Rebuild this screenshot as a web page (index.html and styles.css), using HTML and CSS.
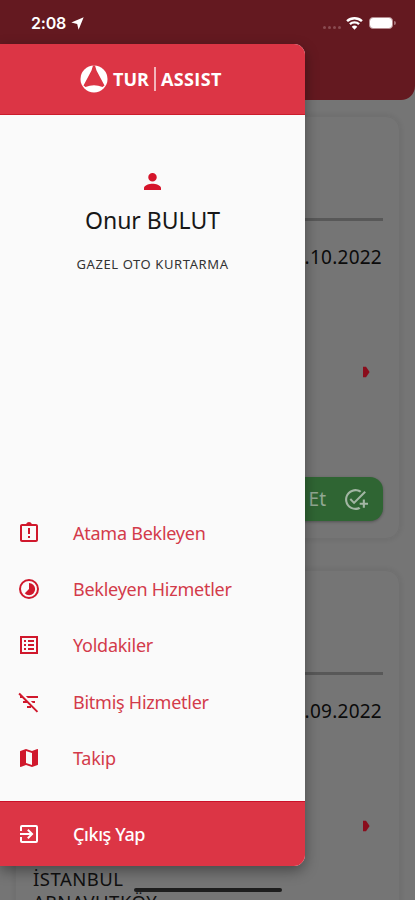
FILE: index.html
```html
<!DOCTYPE html>
<html lang="tr">
<head>
<meta charset="utf-8">
<title>Tur Assist</title>
<link rel="stylesheet" href="styles.css">
</head>
<body>
<div class="screen">
  <header class="topbar">
    <div class="clock">2:08
      <svg class="location" viewBox="0 0 12 12"><path d="M11.7.3 7 11.7 5.700 6.400.3 5z"/></svg>
    </div>
    <div class="signals">
      <span class="cell"><i></i><i></i><i></i><i></i></span>
      <svg class="wifi" viewBox="0 0 16 13"><path d="M1 4.800a10.200 10.200 0 0 1 14 0M3.700 7.600a6.300 6.300 0 0 1 8.600 0" fill="none" stroke="#fff" stroke-width="2.300"/><path d="M5.400 10a4 4 0 0 1 5.200 0L8 12.800z" fill="#fff"/></svg>
      <span class="battery"></span>
    </div>
  </header>
  <main class="cards">
    <section class="card">
      <div class="divider"></div>
      <p class="date">.10.2022</p>
      <svg class="arrow" viewBox="0 0 8 12"><path d="M1 .8h3L7.600 6 4 11.200H1z"/></svg>
      <div class="accept">Et
        <svg viewBox="0 0 24 24"><path d="M22 5.200 10.600 16.600 6.300 12.300l1.400-1.400 2.900 2.900L20.600 3.800zM12 20c-4.400 0-8-3.600-8-8s3.600-8 8-8c1.600 0 3 .5 4.300 1.300l1.400-1.500A10 10 0 1 0 12 22c1.700 0 3.400-.4 4.800-1.200l-1.500-1.500c-1 .5-2.100.7-3.300.7zm7-5h-3v2h3v3h2v-3h3v-2h-3v-3h-2z"/></svg>
      </div>
    </section>
    <section class="card">
      <div class="divider"></div>
      <p class="date">.09.2022</p>
      <svg class="arrow" viewBox="0 0 8 12"><path d="M1 .8h3L7.600 6 4 11.200H1z"/></svg>
      <p class="address">İSTANBUL<br>ARNAVUTKÖY</p>
    </section>
  </main>
  <aside class="drawer">
    <div class="brand">
      <svg class="logo" viewBox="0 0 28 28"><circle cx="14" cy="14" r="13.500" fill="#fff"/><path d="M13 .5h2l1.500 5L24.500 20.500 22.500 22Q14 18.500 5.500 22L3.500 20.500 11.500 5.500z" fill="#dc3545"/></svg>
      <span class="tur">TUR</span><span class="bar"></span><span class="assist">ASSIST</span>
    </div>
    <div class="profile">
      <svg class="person" viewBox="4 4 16 16"><path d="M12 12c2.210 0 4-1.790 4-4s-1.790-4-4-4-4 1.790-4 4 1.790 4 4 4zm0 2c-2.670 0-8 1.340-8 4v2h16v-2c0-2.660-5.330-4-8-4z"/></svg>
      <h1>Onur BULUT</h1>
      <p>GAZEL OTO KURTARMA</p>
    </div>
    <nav class="menu">
      <a><svg viewBox="0 0 24 24"><path d="M11 15h2v2h-2zm0-8h2v6h-2zm8-4h-4.180C14.400 1.840 13.300 1 12 1s-2.400.84-2.820 2H5c-1.100 0-2 .9-2 2v14c0 1.100.9 2 2 2h14c1.100 0 2-.9 2-2V5c0-1.100-.9-2-2-2zm0 16H5V5h14z"/></svg><span>Atama Bekleyen</span></a>
      <a><svg viewBox="0 0 24 24"><path d="M16.240 7.760A5.970 5.970 0 0 0 12 6v6l-4.240 4.240a6 6 0 1 0 8.480-8.480zM12 2a10 10 0 1 0 0 20 10 10 0 0 0 0-20zm0 18a8 8 0 1 1 0-16 8 8 0 0 1 0 16z"/></svg><span>Bekleyen Hizmetler</span></a>
      <a><svg viewBox="0 0 24 24"><path d="M19 5v14H5V5zm2-2H3v18h18zM11 7h6v2h-6zm0 4h6v2h-6zm0 4h6v2h-6zM7 7h2v2H7zm0 4h2v2H7zm0 4h2v2H7z"/></svg><span>Yoldakiler</span></a>
      <a><svg viewBox="0 0 24 24"><path d="M10.830 8H21V6H8.830zM15.830 13H18v-2h-4.170zM14 16.830V18h-4v-2h3.170l-3-3H6v-2h2.170l-3-3H3V6h.17L1.390 4.220 2.800 2.810l18.380 18.380-1.410 1.420z"/></svg><span>Bitmiş Hizmetler</span></a>
      <a><svg viewBox="0 0 24 24"><path d="M20.500 3l-.16.030L15 5.100 9 3 3.360 4.900c-.21.070-.36.250-.36.480V20.500c0 .28.220.5.500.5l.16-.03L9 18.900l6 2.100 5.640-1.900c.21-.07.36-.25.36-.48V3.500c0-.28-.22-.5-.5-.5zM15 19l-6-2.110V5l6 2.110z"/></svg><span>Takip</span></a>
    </nav>
    <div class="logout">
      <svg viewBox="0 0 24 24"><path d="M10.090 15.590 11.500 17l5-5-5-5-1.410 1.410L12.670 11H3v2h9.670zM19 3H5a2 2 0 0 0-2 2v4h2V5h14v14H5v-4H3v4a2 2 0 0 0 2 2h14a2 2 0 0 0 2-2V5a2 2 0 0 0-2-2z"/></svg><span>Çıkış Yap</span>
    </div>
  </aside>
  <div class="home"></div>
</div>
</body>
</html>
```
FILE: styles.css
```css
* { box-sizing: border-box; }
body { margin: 0; font-family: "Noto Sans", sans-serif; }
h1, p { margin: 0; font-weight: 400; }
.screen { position: relative; width: 415px; height: 900px; overflow: hidden; background: #757575; }
.topbar { height: 100px; padding: 13px 22px 0 31px; background: #641920; border-radius: 0 0 14px 0; display: flex; justify-content: space-between; align-items: flex-start; }
.clock { display: flex; align-items: center; gap: 5px; height: 20px; color: #fff; font: 600 16px/20px Inter, sans-serif; letter-spacing: -0.2px; }
.location { width: 13px; height: 13px; fill: #fff; }
.signals { display: flex; align-items: center; height: 20px; }
.cell { display: flex; gap: 2px; margin: 8px 5px 0 0; }
.cell i { width: 3px; height: 3px; border-radius: 50%; background: #8a4b51; }
.wifi { width: 17px; height: 14px; margin-right: 6px; }
.battery { position: relative; width: 24px; height: 12px; border-radius: 4px; background: #fff; border: 1px solid #b58b8f; }
.battery::after { content: ""; position: absolute; right: -4px; top: 3px; width: 2px; height: 4px; border-radius: 0 2px 2px 0; background: #a77579; }
.cards { padding: 16px 15px 0; display: grid; gap: 31px; }
.card { height: 423px; padding: 101px 16px 0 17px; border-radius: 14px; border: 1px solid #707070; box-shadow: 0 0 4px 2px rgba(0,0,0,.05); display: flex; flex-direction: column; align-items: flex-end; }
.divider { width: 100%; height: 3px; background: #585858; }
.date { margin: 21px 1px 0 0; font-size: 19px; line-height: 30px; letter-spacing: .25px; color: #0b0b0b; }
.arrow { width: 8px; height: 12px; margin: 94px 13px 0 0; fill: #8a0d1c; }
.accept { width: 100%; height: 44px; margin-top: 99px; padding-right: 15px; border-radius: 13px; background: #2f6533; color: #92a893; display: flex; align-items: center; justify-content: flex-end; gap: 17px; font-size: 19px; box-shadow: 0 1px 3px rgba(0,0,0,.3); }
.accept svg { width: 25px; height: 25px; fill: #a3b6a4; }
.address { align-self: flex-start; margin-top: 35px; font-size: 18.500px; line-height: 23px; letter-spacing: .5px; color: #101010; }
.drawer { position: absolute; left: 0; top: 44px; width: 305px; height: 822px; display: flex; flex-direction: column; background: #fafafa; border-radius: 0 11px 11px 0; overflow: hidden; box-shadow: 0 5px 14px rgba(0,0,0,.38); }
.brand { height: 71px; padding: 0 0 1px 80px; display: flex; align-items: center; background: #dc3545; border-bottom: 1px solid #cb1c2c; color: #fff; font: 700 18px/28px "Open Sans", sans-serif; }
.logo { width: 28px; height: 28px; margin-right: 5px; }
.bar { width: 2px; height: 24px; margin: 0 5px; background: #f3b5bb; }
.assist { letter-spacing: .4px; }
.profile { padding-top: 58px; display: flex; flex-direction: column; align-items: center; flex: 1; }
.person { width: 17px; height: 17px; fill: #d5142a; }
.profile h1 { margin-top: 13px; font-size: 23px; line-height: 34px; color: #171717; }
.profile p { margin-top: 17px; font-size: 13px; line-height: 20px; letter-spacing: .6px; color: #333; }
.menu { height: 281px; margin-bottom: 15px; display: grid; grid-template-rows: repeat(5, 1fr); }
.menu a, .logout { display: flex; align-items: center; gap: 32px; padding-left: 17px; font-size: 18px; letter-spacing: -.25px; color: #d33b4a; }
.menu svg, .logout svg { width: 24px; height: 24px; fill: #d0182c; flex: none; }
.logout { height: 65px; background: #dc3545; border-top: 1px solid #cb1028; color: #fff; font-weight: 500; letter-spacing: -.4px; }
.logout svg { fill: #fff; }
.home { position: absolute; left: 134px; top: 888px; width: 148px; height: 4px; border-radius: 2px; background: #1d1d1d; }
```
